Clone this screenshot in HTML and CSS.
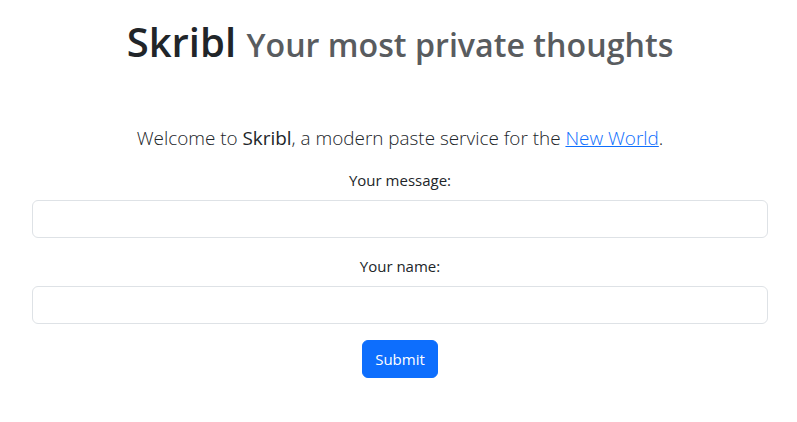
FILE: index.html
```html
<!DOCTYPE html>
<html lang="en">
<head>
<meta charset="utf-8">
<title>Skribl</title>
<link rel="stylesheet" href="styles.css">
</head>
<body>
<main class="page">
  <h1 class="title">Skribl <small class="subtitle">Your most private thoughts</small></h1>
  <p class="lead">Welcome to <span class="brand">Skribl</span>, a modern paste service for the <a href="#" class="link">New World</a>.</p>
  <form class="form">
    <div class="field">
      <label class="label" for="msg">Your message:</label>
      <input class="input" id="msg" type="text">
    </div>
    <div class="field">
      <label class="label" for="name">Your name:</label>
      <input class="input" id="name" type="text">
    </div>
    <button class="btn" type="button">Submit</button>
  </form>
</main>
</body>
</html>
```
FILE: styles.css
```css
* { box-sizing: border-box; }
html, body { margin: 0; padding: 0; background: #fff; }
body {
  font-family: "Open Sans", "Noto Sans", sans-serif;
  color: #212529;
  font-size: 16px;
  line-height: 1.5;
}
.page {
  padding: 18px 29px 0 32px;
  text-align: center;
}
.title {
  margin: 0;
  font-size: 40px;
  font-weight: 600;
  line-height: 48px;
  color: #212529;
}
.subtitle {
  font-size: 32.2px;
  color: #595c5f;
  font-weight: 600;
}
.lead {
  margin: 54px 0 15px;
  font-size: 18.9px;
  font-weight: 300;
  line-height: 30px;
  color: #212529;
}
.brand { font-weight: 400; }
.link { color: #0d6efd; text-decoration: underline; }
.form { display: flex; flex-direction: column; align-items: center; }
.field { width: 100%; display: flex; flex-direction: column; align-items: center; margin-bottom: 16px; }
.label { font-size: 15px; line-height: 24px; margin-bottom: 8px; }
.input {
  width: 100%;
  height: 38px;
  border: 1px solid #dee2e6;
  border-radius: 6px;
  background: #fff;
  font: inherit;
}
.btn {
  height: 38px;
  padding: 0 12.5px;
  border: 1px solid #0d6efd;
  background: #0d6efd;
  color: #fff;
  border-radius: 6px;
  font-family: inherit;
  font-size: 15px;
}
```
